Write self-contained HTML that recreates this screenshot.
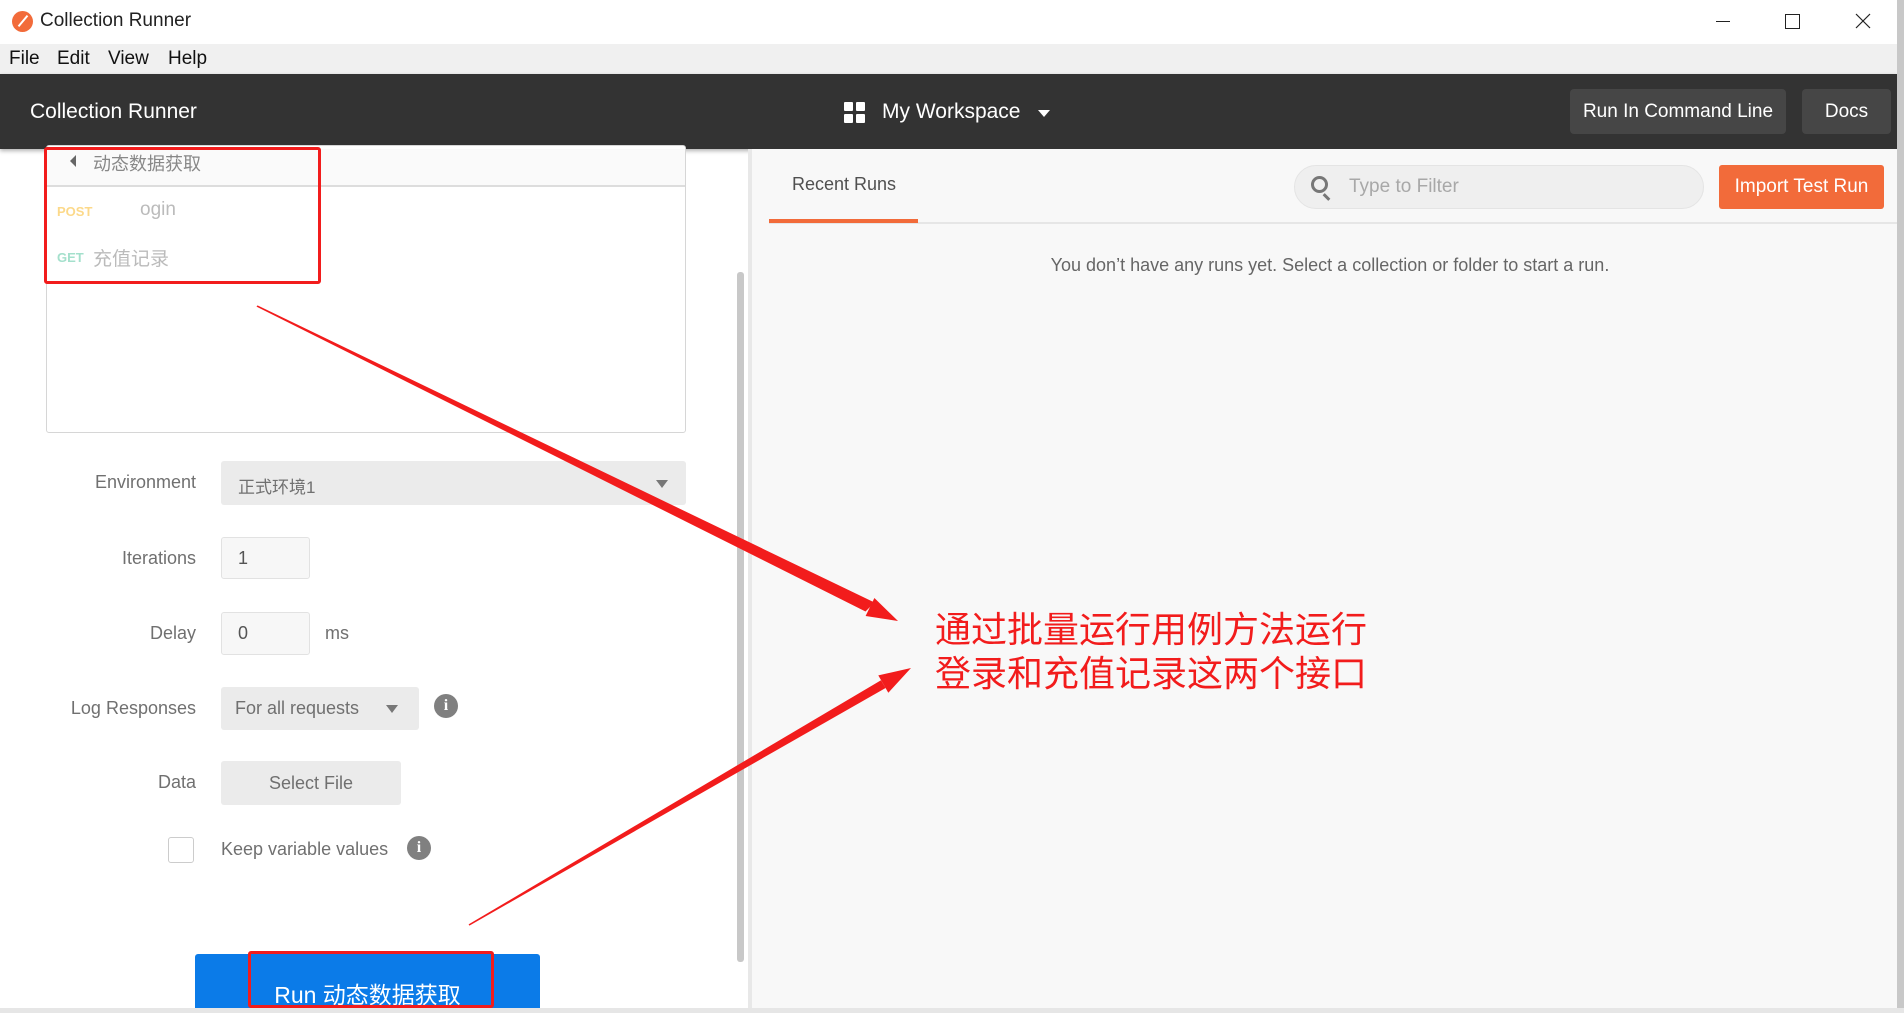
<!DOCTYPE html>
<html><head><meta charset="utf-8"><style>
*{margin:0;padding:0;box-sizing:border-box}
body{width:1904px;height:1013px;position:relative;overflow:hidden;background:#fff;font-family:"Liberation Sans","Noto Sans CJK SC",sans-serif;color:#505050}
.a{position:absolute}
.lbl{position:absolute;font-size:18px;color:#707070;text-align:right;width:196px;left:0}
.inp{position:absolute;background:#f7f7f7;border:1px solid #e2e2e2;border-radius:3px;font-size:18px;color:#555;padding-left:16px}
.btn{position:absolute;background:#ebebeb;border-radius:3px;font-size:18px;color:#707070}
.info{position:absolute;width:24px;height:24px;border-radius:50%;background:#808080;color:#fff;font-weight:bold;font-size:16px;text-align:center;line-height:24px;font-family:"Liberation Serif",serif}
</style></head><body>
<!-- title bar -->
<div class="a" style="left:12px;top:11px;width:21px;height:21px;border-radius:50%;background:#f26b3a"></div>
<div class="a" style="left:16px;top:20px;width:14px;height:2px;background:#fff;transform:rotate(-50deg)"></div>
<div class="a" style="left:40px;top:10px;font-size:19px;color:#222">Collection Runner</div>
<svg class="a" style="left:1700px;top:0" width="200" height="44">
<line x1="16" y1="21.5" x2="30" y2="21.5" stroke="#222" stroke-width="1"/>
<rect x="85.5" y="14.5" width="14" height="14" fill="none" stroke="#222" stroke-width="1"/>
<line x1="156" y1="14" x2="170" y2="28" stroke="#222" stroke-width="1.2"/>
<line x1="170" y1="14" x2="156" y2="28" stroke="#222" stroke-width="1.2"/>
</svg>
<!-- menu -->
<div class="a" style="left:0;top:44px;width:1897px;height:30px;background:#f0f0f0;font-size:19px;color:#111">
<span class="a" style="left:9px;top:4px">File</span><span class="a" style="left:57px;top:4px">Edit</span><span class="a" style="left:108px;top:4px">View</span><span class="a" style="left:168px;top:4px">Help</span></div>
<!-- header -->
<div class="a" style="left:0;top:74px;width:1897px;height:75px;background:#333;box-shadow:0 2px 4px rgba(0,0,0,.3)">
<div class="a" style="left:30px;top:26px;font-size:21px;color:#fff">Collection Runner</div>
<div class="a" style="left:844px;top:28px;width:9px;height:9px;background:#fff;border-radius:1px"></div>
<div class="a" style="left:856px;top:28px;width:9px;height:9px;background:#fff;border-radius:1px"></div>
<div class="a" style="left:844px;top:40px;width:9px;height:9px;background:#fff;border-radius:1px"></div>
<div class="a" style="left:856px;top:40px;width:9px;height:9px;background:#fff;border-radius:1px"></div>
<div class="a" style="left:882px;top:26px;font-size:21px;color:#fff">My Workspace</div>
<div class="a" style="left:1038px;top:36px;border-left:6px solid transparent;border-right:6px solid transparent;border-top:7px solid #fff"></div>
<div class="a" style="left:1570px;top:15px;width:216px;height:45px;background:#464646;border-radius:4px;color:#fff;font-size:19px;text-align:center;line-height:45px">Run In Command Line</div>
<div class="a" style="left:1802px;top:15px;width:89px;height:45px;background:#464646;border-radius:4px;color:#fff;font-size:19px;text-align:center;line-height:45px">Docs</div>
</div>
<!-- left scrollbar -->
<div class="a" style="left:737px;top:272px;width:7px;height:690px;background:#c8c8c8;border-radius:3px"></div>
<div class="a" style="left:748px;top:149px;width:4px;height:864px;background:#e8e8e8"></div>
<!-- collection box -->
<div class="a" style="left:46px;top:145px;width:640px;height:288px;border:1px solid #d6d6d6;border-radius:3px;background:#fff"></div>
<div class="a" style="left:47px;top:149px;width:638px;height:38px;background:#fafafa;border-bottom:2px solid #ddd"></div>
<div class="a" style="left:70px;top:155px;border-top:6px solid transparent;border-bottom:6px solid transparent;border-right:6px solid #666"></div>
<div class="a" style="left:93px;top:150px;font-size:18px;color:#888">动态数据获取</div>
<div class="a" style="left:57px;top:204px;font-size:13px;color:#fcd98a;font-weight:bold">POST</div>
<div class="a" style="left:140px;top:199px;font-size:19px;color:#bbb">ogin</div>
<div class="a" style="left:57px;top:250px;font-size:13px;color:#a4e0cc;font-weight:bold">GET</div>
<div class="a" style="left:93px;top:244px;font-size:19px;color:#bbb">充值记录</div>
<div class="a" style="left:44px;top:147px;width:277px;height:137px;border:3px solid #f21c1c;border-radius:3px"></div>
<!-- form -->
<div class="lbl" style="top:472px">Environment</div>
<div class="btn" style="left:221px;top:461px;width:465px;height:44px;padding:12px 17px;font-size:17px">正式环境1</div>
<div class="a" style="left:656px;top:480px;border-left:6px solid transparent;border-right:6px solid transparent;border-top:8px solid #777"></div>
<div class="lbl" style="top:548px">Iterations</div>
<div class="inp" style="left:221px;top:537px;width:89px;height:42px;line-height:40px">1</div>
<div class="lbl" style="top:623px">Delay</div>
<div class="inp" style="left:221px;top:612px;width:89px;height:43px;line-height:41px">0</div>
<div class="a" style="left:325px;top:623px;font-size:18px;color:#707070">ms</div>
<div class="lbl" style="top:698px">Log Responses</div>
<div class="btn" style="left:221px;top:687px;width:198px;height:43px;padding:11px 14px">For all requests</div>
<div class="a" style="left:386px;top:705px;border-left:6px solid transparent;border-right:6px solid transparent;border-top:8px solid #777"></div>
<div class="info" style="left:434px;top:694px">i</div>
<div class="lbl" style="top:772px">Data</div>
<div class="btn" style="left:221px;top:761px;width:180px;height:44px;text-align:center;line-height:44px">Select File</div>
<div class="a" style="left:168px;top:837px;width:26px;height:26px;border:1px solid #ccc;border-radius:3px;background:#fff"></div>
<div class="a" style="left:221px;top:839px;font-size:18px;color:#707070">Keep variable values</div>
<div class="info" style="left:407px;top:836px">i</div>
<div class="a" style="left:195px;top:954px;width:345px;height:59px;background:#0b7be8;border-radius:3px;color:#fff;font-size:23px;text-align:center;padding-top:22px">Run 动态数据获取</div>
<div class="a" style="left:248px;top:951px;width:246px;height:57px;border:3px solid #f21c1c;border-radius:3px"></div>
<div class="a" style="left:0;top:1008px;width:1904px;height:5px;background:#e6e6e6"></div>
<!-- right panel -->
<div class="a" style="left:752px;top:149px;width:1145px;height:859px;background:#f8f8f8"></div>
<div class="a" style="left:769px;top:222px;width:1128px;height:2px;background:#e6e6e6"></div>
<div class="a" style="left:792px;top:174px;font-size:18px;color:#505050">Recent Runs</div>
<div class="a" style="left:769px;top:219px;width:149px;height:4px;background:#f26b3a"></div>
<div class="a" style="left:1294px;top:165px;width:410px;height:44px;border:1px solid #e4e4e4;border-radius:22px;background:#efefef"></div>
<div class="a" style="left:1311px;top:176px;width:17px;height:17px;border:3px solid #777;border-radius:50%"></div>
<div class="a" style="left:1325px;top:193px;width:3px;height:8px;background:#777;transform:rotate(-45deg)"></div>
<div class="a" style="left:1349px;top:176px;font-size:19px;color:#a8a8a8">Type to Filter</div>
<div class="a" style="left:1719px;top:165px;width:165px;height:44px;background:#f26b3a;border-radius:3px;color:#fff;font-size:19px;text-align:center;line-height:44px">Import Test Run</div>
<div class="a" style="left:760px;top:255px;width:1140px;text-align:center;font-size:18px;color:#666">You don’t have any runs yet. Select a collection or folder to start a run.</div>
<div class="a" style="left:1897px;top:0;width:7px;height:1008px;background:#c8c8c8"></div>
<!-- annotation -->
<svg class="a" style="left:0;top:0" width="1904" height="1013">
<polygon points="256.5,306.6 257.5,305.4 874.5,602.5 865.5,611.5" fill="#f21c1c"/>
<polygon points="898,621 865.6,616 874.4,598" fill="#f21c1c"/>
<polygon points="468.6,924.4 469.4,925.6 885.6,688 881,680.2" fill="#f21c1c"/>
<polygon points="911,668 888.3,692.8 878.3,675.4" fill="#f21c1c"/>
</svg>
<div class="a" style="left:935px;top:605px;font-size:36px;line-height:44px;color:#f21c1c;font-family:'Noto Sans CJK SC',sans-serif">通过批量运行用例方法运行<br>登录和充值记录这两个接口</div>
</body></html>
